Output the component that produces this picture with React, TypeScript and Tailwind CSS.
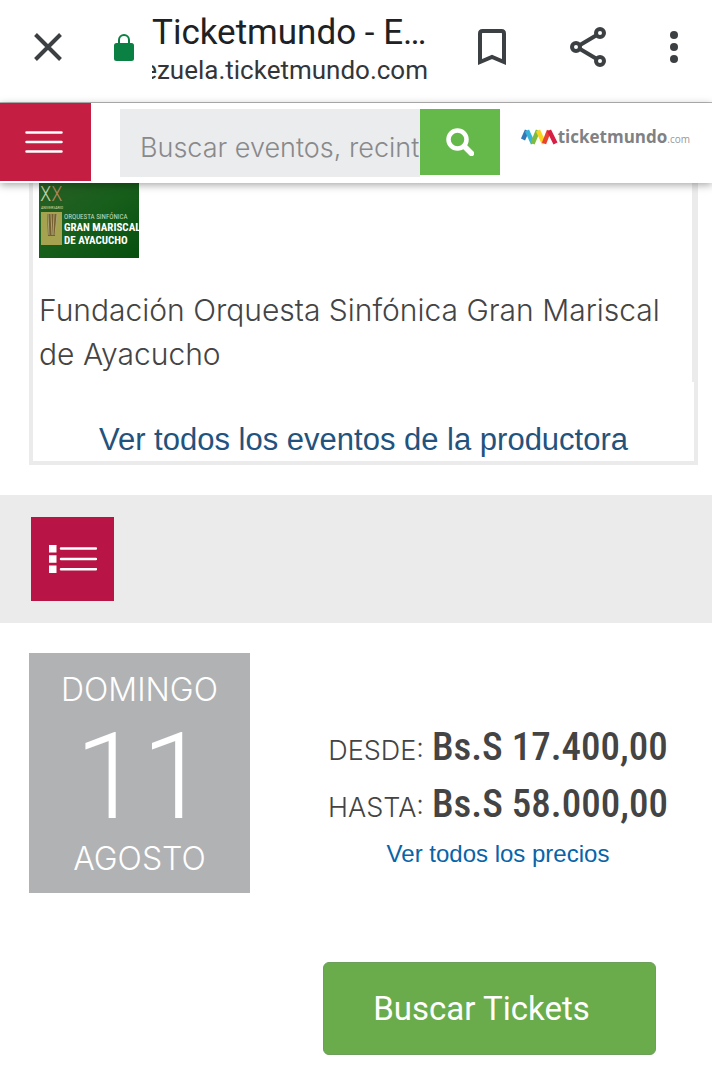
function BrowserBar() {
  return (
    <header className="flex h-[103px] items-center border-b border-[#b9b9b9] bg-white pb-2 font-['Roboto',sans-serif]">
      <button aria-label="Cerrar" className="ml-8 flex h-8 w-8 shrink-0 items-center justify-center">
        <svg viewBox="0 0 32 32" className="h-8 w-8" stroke="#3c4043" strokeWidth="4" fill="none">
          <path d="M3.5 3.5 28.5 28.5M28.5 3.5 3.5 28.5" />
        </svg>
      </button>
      <svg viewBox="0 0 20 27" className="ml-[50px] h-[27px] w-5 shrink-0">
        <path d="M5 10V6a5 5 0 0 1 10 0v4" fill="none" stroke="#0b8043" strokeWidth="2" />
        <rect x="0" y="9" width="20" height="18" rx="2.5" fill="#0b8043" />
      </svg>
      <div className="ml-[18px] flex min-w-0 flex-1 flex-col">
        <h1 className="truncate pt-px text-[35px] leading-[44px] text-[#202124]">Ticketmundo - E…</h1>
        <div className="flex justify-end overflow-hidden">
          <span className="whitespace-nowrap text-[26px] leading-[30px] text-[#333639]">ezuela.ticketmundo.com</span>
        </div>
      </div>
      <div className="ml-[50px] mr-[34px] flex shrink-0 items-center">
        <button aria-label="Guardar" className="h-9 w-7">
          <svg viewBox="0 0 28 36" className="h-9 w-7" fill="none" stroke="#3c4043" strokeWidth="4">
            <path d="M2 33V4.500Q2 2 4.500 2H23.500Q26 2 26 4.500V33L14 28Z" />
          </svg>
        </button>
        <button aria-label="Compartir" className="ml-16 h-10 w-9">
          <svg viewBox="0 0 36 40" className="h-10 w-9" fill="none" stroke="#3c4043" strokeWidth="4">
            <path d="M10 18 26 8.500M10 22 26 31.500" />
            <circle cx="6" cy="20" r="4" />
            <circle cx="30" cy="6" r="4" />
            <circle cx="30" cy="34" r="4" />
          </svg>
        </button>
        <button aria-label="Más opciones" className="ml-16 h-8 w-2">
          <svg viewBox="0 0 8 32" className="h-8 w-2" fill="#3c4043">
            <circle cx="4" cy="4" r="4" />
            <circle cx="4" cy="16" r="4" />
            <circle cx="4" cy="28" r="4" />
          </svg>
        </button>
      </div>
    </header>
  );
}

function BrandLogo() {
  return (
    <a href="#inicio" className="mr-[22px] ml-5 mt-5 flex h-7 shrink-0 items-center">
      <svg viewBox="0 0 38 16" className="h-4 w-[38px]" fill="none" strokeWidth="4.500">
        <path d="M3 10.500 7 1.500" stroke="#3478b8" />
        <path d="M7 1.500 13 14.500" stroke="#37b5d8" />
        <path d="M12.500 14.500 18 1.500" stroke="#7dbb42" />
        <path d="M18 1.500 24 14.500" stroke="#f8d51c" />
        <path d="M24 14.500 29 1.500" stroke="#e8432e" />
        <path d="M29 1.500 35.500 14.500" stroke="#d81e45" />
      </svg>
      <span className="font-['Open_Sans',sans-serif] text-[17px] font-bold leading-7 text-[#808184]">ticketmundo</span>
      <span className="font-['Open_Sans',sans-serif] pt-1 text-[10px] leading-6 text-[#97989b]">.com</span>
    </a>
  );
}

function SiteHeader() {
  return (
    <div className="relative z-10 flex h-20 items-start bg-white shadow-[0_2px_8px_rgba(0,0,0,0.35)]">
      <button aria-label="Menú" className="flex h-[78px] w-[91px] shrink-0 items-center justify-center bg-[#c41f42]">
        <svg viewBox="0 0 38 22" className="mr-1 h-[22px] w-[38px]" stroke="#fff" strokeWidth="2.500" strokeLinecap="round">
          <path d="M1.500 1.500H36.500M1.500 11H36.500M1.500 20.500H36.500" />
        </svg>
      </button>
      <form className="ml-[29px] mt-[6px] flex min-w-0 flex-1 items-start">
        <input
          type="text"
          aria-label="Buscar eventos"
          placeholder="Buscar eventos, recintos"
          className="h-[68px] min-w-0 flex-1 bg-[#ebecee] pl-5 pt-2 font-['Inter',sans-serif] text-[27px] font-light placeholder:text-[#88898b] outline-none"
        />
        <button type="button" aria-label="Buscar" className="flex h-[66px] w-20 shrink-0 items-center justify-center bg-[#65b84a]">
          <svg viewBox="0 0 28 28" className="h-7 w-7" fill="none" stroke="#fff" strokeWidth="4.500">
            <circle cx="11.500" cy="11.500" r="9" />
            <path d="M18.500 18.500 25.500 25.500" strokeWidth="5.500" strokeLinecap="round" />
          </svg>
        </button>
      </form>
      <BrandLogo />
    </div>
  );
}

function ProducerBadge() {
  return (
    <svg viewBox="0 0 100 75" className="h-[75px] w-[100px]" role="img" aria-label="Orquesta Sinfónica Gran Mariscal de Ayacucho">
      <defs>
        <linearGradient id="badge" x1="0" y1="0" x2="1" y2="1">
          <stop offset="0" stopColor="#285f24" />
          <stop offset="0.5" stopColor="#175e1b" />
          <stop offset="1" stopColor="#064f0d" />
        </linearGradient>
      </defs>
      <rect width="100" height="75" fill="url(#badge)" />
      <text x="1" y="18" fontFamily="Roboto Condensed" fontWeight="300" fontSize="21" fill="#c5d1a5">
        X<tspan fill="#b6875c">X</tspan>
      </text>
      <text x="2" y="26" fontFamily="Roboto Condensed" fontSize="4" fill="#cfdcae">ANIVERSARIO</text>
      <rect x="2" y="29" width="21" height="33" fill="#a5a34f" />
      <path d="M8 31h10l-2 22H9z" fill="#77602f" />
      <path d="M9 31l1 21M12 31l1 21M15 31l-1 21M18 31l-2 21" stroke="#a9a577" strokeWidth="1" />
      <text x="25" y="36" fontFamily="Roboto Condensed" fontSize="7" fill="#c9dbbf">ORQUESTA SINFÓNICA</text>
      <text x="25" y="48" fontFamily="Roboto Condensed" fontWeight="bold" fontSize="11" fill="#fff">GRAN MARISCAL</text>
      <text x="25" y="61" fontFamily="Roboto Condensed" fontWeight="bold" fontSize="11" fill="#fff">DE AYACUCHO</text>
    </svg>
  );
}

function ProducerCard() {
  return (
    <section className="mr-[14px] ml-[29px] border-4 border-t-0 border-[#ebebeb]">
      <div className="border-r-2 border-[#ebebeb] pb-[6px] pl-[6px]">
        <ProducerBadge />
        <p className="pt-[30px] font-['Inter',sans-serif] text-[30px] font-light leading-[44px] text-[#444]">
          Fundación Orquesta Sinfónica Gran Mariscal de Ayacucho
        </p>
      </div>
      <div className="flex h-[79px] items-end justify-center pb-[3px]">
        <a href="#productora" className="font-['Liberation_Sans',sans-serif] text-[31px] leading-9 text-[#23527c]">
          Ver todos los eventos de la productora
        </a>
      </div>
    </section>
  );
}

function ListToolbar() {
  return (
    <div className="mt-[30px] bg-[#ebebeb] px-[31px] py-[22px]">
      <button aria-label="Ver lista" className="flex h-[84px] w-[83px] items-center justify-center bg-[#b81546]">
        <svg viewBox="0 0 48 28" className="h-7 w-12" fill="#fff">
          <path d="M0 0h7.500v7.500H0zM0 10.200h7.500v7.500H0zM0 20.400h7.500v7.500H0z" />
          <path d="M12 3.500H47M12 14H47M12 24.200H47" stroke="#fff" strokeWidth="2.500" strokeLinecap="round" />
        </svg>
      </button>
    </div>
  );
}

function PriceRow({ label, amount }: { label: string; amount: string }) {
  return (
    <p className="flex h-[57px] items-baseline justify-center gap-2 whitespace-nowrap leading-[57px] text-[#444]">
      <span className="font-['Inter',sans-serif] text-[27px] font-light">{label}</span>
      <strong className="font-['Roboto_Condensed','Roboto',sans-serif] text-[39px] font-medium">{amount}</strong>
    </p>
  );
}

function EventDate() {
  return (
    <section className="mt-[30px] mr-[14px] ml-[29px] flex gap-12">
      <time
        dateTime="08-11"
        className="flex h-[240px] w-[221px] shrink-0 flex-col items-center bg-[#b1b2b4] font-['Inter',sans-serif] font-light text-white"
      >
        <span className="pt-4 text-[32px] leading-[42px]">DOMINGO</span>
        <span className="pt-1 pl-1 font-['Roboto',sans-serif] text-[120px] leading-[124px]">11</span>
        <span className="text-[32px] leading-[40px]">AGOSTO</span>
      </time>
      <div className="min-w-0 flex-1 pt-[66px] text-center">
        <PriceRow label="DESDE:" amount="Bs.S 17.400,00" />
        <PriceRow label="HASTA:" amount="Bs.S 58.000,00" />
        <a href="#precios" className="block pt-[5px] font-['Liberation_Sans',sans-serif] text-[24px] leading-8 text-[#0864a8]">
          Ver todos los precios
        </a>
        <button className="mt-[92px] block h-[93px] w-[333px] max-w-full rounded-md border border-[#6c9f5b] bg-[#6aac4b] pr-4 ml-[25px] font-['Roboto',sans-serif] text-[33px] text-white">
          Buscar Tickets
        </button>
      </div>
    </section>
  );
}

export default function App() {
  return (
    <div className="min-h-screen bg-white pb-7">
      <BrowserBar />
      <SiteHeader />
      <main>
        <ProducerCard />
        <ListToolbar />
        <EventDate />
      </main>
    </div>
  );
}
